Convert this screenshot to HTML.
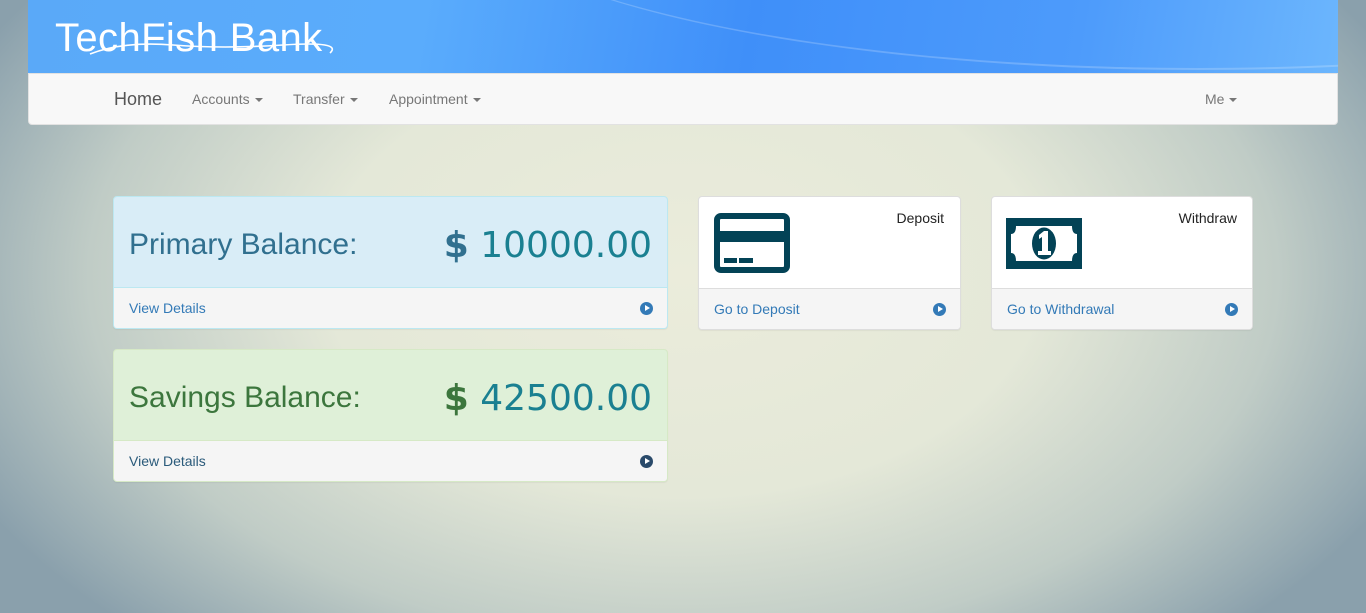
<!DOCTYPE html>
<html><head><style>
*{box-sizing:border-box;margin:0;padding:0}
body{width:1366px;height:613px;overflow:hidden;font-family:"Liberation Sans",sans-serif;
background:radial-gradient(ellipse 58% 80% at 50% 45%,#ebecdb 0%,#e4e8d8 45%,#c0ccc6 75%,#8aa0ac 100%);position:relative}
.hdr{position:absolute;left:28px;top:0;width:1310px;height:74px;
background:linear-gradient(100deg,#5aa9f8 0%,#5aacfc 30%,#3f8ff9 55%,#4d9bfb 80%,#6cb6fd 100%);overflow:hidden}
.sw{position:absolute;border-radius:50%;border-bottom:2px solid rgba(255,255,255,.2)}
.logo{position:absolute;left:27px;top:16px;font-size:40px;color:#fff;letter-spacing:0.4px}
.nav{position:absolute;left:28px;top:73px;width:1310px;height:52px;background:#f8f8f8;border:1px solid #e2e2e2;border-radius:0 0 4px 4px}
.nav span{position:absolute;top:17px;font-size:14px;color:#777}
.car{display:inline-block;width:0;height:0;border-left:4px solid transparent;border-right:4px solid transparent;border-top:4px solid #777;vertical-align:middle;margin-left:5px}
.panel{position:absolute;border-radius:4px;overflow:hidden;background:#fff;box-shadow:0 1px 1px rgba(0,0,0,.05)}
.ft{position:absolute;left:0;right:0;bottom:0;height:41px;background:#f5f5f5;border-top:1px solid #ddd;font-size:14px;color:#337ab7}
.ft .t{position:absolute;left:15px;top:12px}
.ft .a{position:absolute;right:14px;top:14px;width:13px;height:13px;border-radius:50%;background:#337ab7}
.ft .a:after{content:"";position:absolute;top:3px;width:0;height:0;border:3.5px solid transparent;border-left:5px solid #fff;left:5px}
.big{position:absolute;font-size:30px;top:31px;left:15px}
.amt{position:absolute;right:15px;top:28px;font-family:"DejaVu Sans",sans-serif;font-size:36px;color:#1a8091}
</style></head><body>
<div class="hdr"><div class="sw" style="left:420px;top:-300px;width:1500px;height:370px"></div>
<div class="logo">TechFish Bank</div>
<svg style="position:absolute;left:55px;top:33px" width="270" height="25"><path d="M7 21 Q40 8 90 12 T200 12 T247 20" stroke="#fff" stroke-width="1.6" fill="none"/></svg>
</div>
<div class="nav">
<span style="left:85px;top:15px;font-size:18px;color:#555">Home</span>
<span style="left:163px">Accounts<i class="car"></i></span>
<span style="left:264px">Transfer<i class="car"></i></span>
<span style="left:360px">Appointment<i class="car"></i></span>
<span style="left:1176px">Me<i class="car"></i></span>
</div>

<div class="panel" style="left:113px;top:196px;width:555px;height:133px;border:1px solid #bce8f1;background:#d9edf7">
<div class="big" style="color:#31708f">Primary Balance:</div>
<div class="amt"><b style="color:#31708f">$</b> 10000.00</div>
<div class="ft" style="border-top-color:#bce8f1"><span class="t">View Details</span><span class="a"></span></div>
</div>
<div class="panel" style="left:113px;top:349px;width:555px;height:133px;border:1px solid #d6e9c6;background:#dff0d8">
<div class="big" style="color:#3c763d">Savings Balance:</div>
<div class="amt"><b style="color:#3c763d">$</b> 42500.00</div>
<div class="ft" style="border-top-color:#d6e9c6;color:#2a5a7a"><span class="t">View Details</span><span class="a" style="background:#2a4a6a"></span></div>
</div>

<div class="panel" style="left:698px;top:196px;width:263px;height:134px;border:1px solid #ddd">
<svg style="position:absolute;left:15px;top:16px" width="76" height="60"><rect x="3" y="3" width="70" height="54" rx="4" fill="none" stroke="#034356" stroke-width="6"/><rect x="3" y="18" width="70" height="11" fill="#034356"/><rect x="10" y="45" width="13" height="5" fill="#034356"/><rect x="25" y="45" width="14" height="5" fill="#034356"/></svg>
<div style="position:absolute;right:16px;top:13px;font-size:14px;color:#222">Deposit</div>
<div class="ft"><span class="t">Go to Deposit</span><span class="a"></span></div>
</div>
<div class="panel" style="left:991px;top:196px;width:262px;height:134px;border:1px solid #ddd">
<svg style="position:absolute;left:14px;top:21px" width="76" height="51"><path d="M0 0H76V51H0Z M10 8 Q10 16 5 16 V35 Q10 35 10 43 H66 Q66 35 71 35 V16 Q66 16 66 8Z" fill="#034356" fill-rule="evenodd"/><ellipse cx="38" cy="25.5" rx="12" ry="16" fill="#034356"/><path d="M33 17 L38 13 H42 V33 H45 V37 H32 V33 H36 V19 L33 21Z" fill="#fff"/></svg>
<div style="position:absolute;right:15px;top:13px;font-size:14px;color:#222">Withdraw</div>
<div class="ft"><span class="t">Go to Withdrawal</span><span class="a"></span></div>
</div>
</body></html>
